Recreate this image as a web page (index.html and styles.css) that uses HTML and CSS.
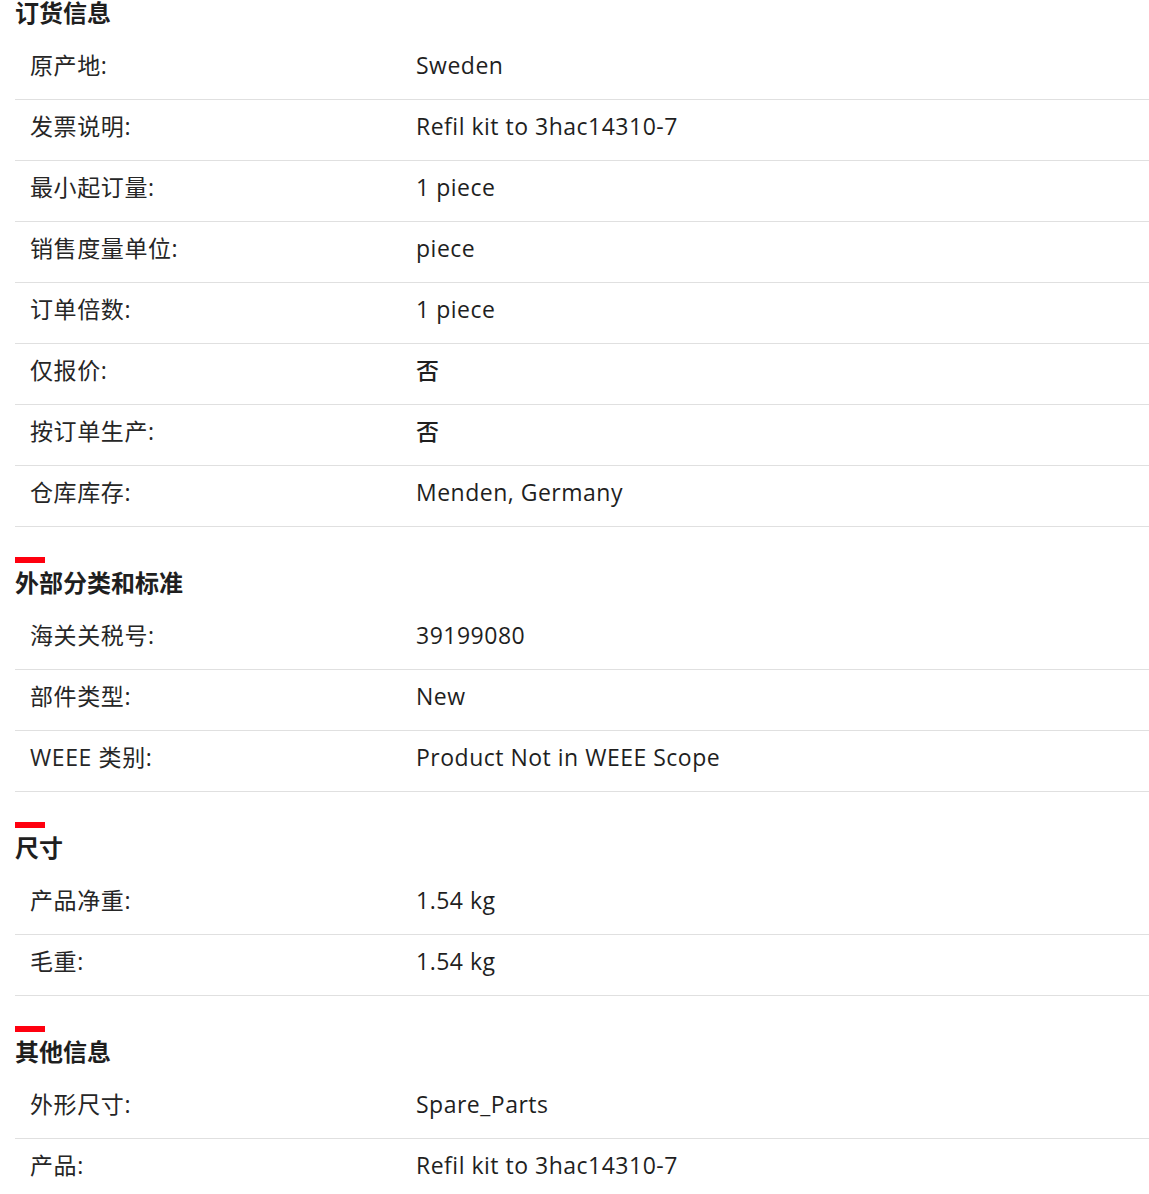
FILE: index.html
```html
<!DOCTYPE html>
<html lang="zh">
<head>
<meta charset="utf-8">
<title>订货信息</title>
<link rel="stylesheet" href="styles.css">
</head>
<body>
<div class="page">
  <section class="sec first">
    <div class="bar"></div>
    <h2 class="title">订货信息</h2>
    <div class="row"><div class="lbl">原产地:</div><div class="val">Sweden</div></div>
    <div class="row"><div class="lbl">发票说明:</div><div class="val">Refil kit to 3hac14310-7</div></div>
    <div class="row"><div class="lbl">最小起订量:</div><div class="val">1 piece</div></div>
    <div class="row"><div class="lbl">销售度量单位:</div><div class="val">piece</div></div>
    <div class="row"><div class="lbl">订单倍数:</div><div class="val">1 piece</div></div>
    <div class="row"><div class="lbl">仅报价:</div><div class="val">否</div></div>
    <div class="row"><div class="lbl">按订单生产:</div><div class="val">否</div></div>
    <div class="row"><div class="lbl">仓库库存:</div><div class="val">Menden, Germany</div></div>
  </section>
  <section class="sec">
    <div class="bar"></div>
    <h2 class="title">外部分类和标准</h2>
    <div class="row"><div class="lbl">海关关税号:</div><div class="val">39199080</div></div>
    <div class="row"><div class="lbl">部件类型:</div><div class="val">New</div></div>
    <div class="row"><div class="lbl">WEEE 类别:</div><div class="val">Product Not in WEEE Scope</div></div>
  </section>
  <section class="sec">
    <div class="bar"></div>
    <h2 class="title">尺寸</h2>
    <div class="row"><div class="lbl">产品净重:</div><div class="val">1.54 kg</div></div>
    <div class="row"><div class="lbl">毛重:</div><div class="val">1.54 kg</div></div>
  </section>
  <section class="sec">
    <div class="bar"></div>
    <h2 class="title">其他信息</h2>
    <div class="row"><div class="lbl">外形尺寸:</div><div class="val">Spare_Parts</div></div>
    <div class="row"><div class="lbl">产品:</div><div class="val">Refil kit to 3hac14310-7</div></div>
  </section>
</div>
</body>
</html>
```
FILE: styles.css
```css
html, body {
  margin: 0;
  padding: 0;
  background: #ffffff;
}
body {
  font-family: "Open Sans", "Noto Sans CJK SC", sans-serif;
  color: #1f1f1f;
  overflow: hidden;
}
.page {
  margin: -13px 0 0 15px;
}
.sec {
  margin-top: 30px;
}
.sec.first {
  margin-top: 0;
}
.bar {
  width: 30px;
  height: 6px;
  background: #ff000f;
}
.title {
  margin: 5px 0 11px;
  font-size: 24px;
  line-height: 30px;
  font-weight: 700;
  color: #1f1f1f;
}
.row {
  display: grid;
  grid-template-columns: 386px 1fr;
  padding: 11px 0 19px 15px;
  border-bottom: 1px solid #e0e0e0;
  font-size: 23px;
  line-height: 30px;
  letter-spacing: 0.5px;
  font-weight: 500;
}
.lbl {
  color: #262626;
  font-weight: 400;
  letter-spacing: 0.6px;
}
.val {
  color: #1f1f1f;
}
```
